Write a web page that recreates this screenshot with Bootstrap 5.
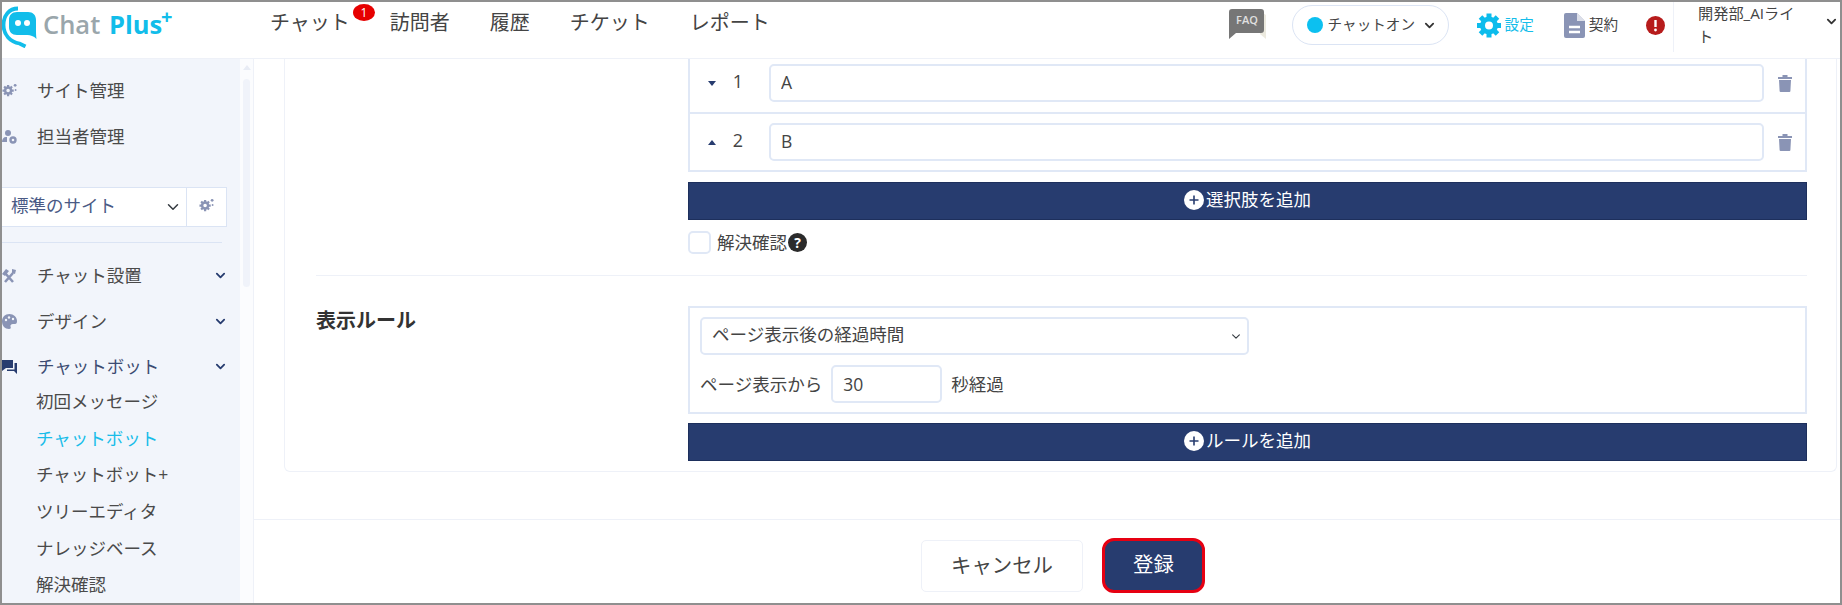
<!DOCTYPE html>
<html lang="ja">
<head>
<meta charset="utf-8">
<title>Chat Plus</title>
<link rel="stylesheet" href="https://cdn.jsdelivr.net/npm/bootstrap@5.3.0/dist/css/bootstrap.min.css">
<style>
html,body{height:605px;overflow:hidden;background:#fff}
body{font-family:"Open Sans","Noto Sans CJK JP",sans-serif;font-size:17.5px;color:#444}
.frame{height:605px;border:2px solid #8f8f8f;display:flex;flex-direction:column;overflow:hidden}
.icon-defs{position:absolute;width:0;height:0}
.top-bar{height:57px;flex:none;border-bottom:1px solid #eef1f8;display:flex;align-items:flex-start}
.logo-box{width:268px;height:46px;flex:none;display:flex;align-items:center}
.logo-mark{flex:none;margin-top:4px}
.logo-word{font-size:25.5px;font-weight:600;color:#9aa6ab;margin-left:5px;line-height:1;white-space:nowrap}
.logo-word b{font-weight:700;color:#12bdea;margin-left:2px}
.logo-word sup{font-size:20px;font-weight:700;color:#12bdea;top:-.5em;margin-left:-1px}
.main-nav{height:42px;align-items:center;gap:40px;display:flex}
.main-nav a{font-size:20px;color:#444;text-decoration:none;white-space:nowrap;position:relative}
.count-pill{position:absolute;left:83px;top:-4px;width:22px;height:17px;border-radius:50%;background:#e60000;color:#fff;font-size:12px;line-height:17px;text-align:center}
.tools{margin-left:auto;display:flex;align-items:center;height:46px;color:#444;font-size:14.6px;white-space:nowrap}
.faq{width:37px;height:30px;margin-right:26px;margin-top:-2px;flex:none}
.on-pill{width:157px;height:40px;border:1px solid #dbe4f4;border-radius:20px;display:flex;align-items:center;padding-left:14px;background:#fff;margin-right:28px}
.on-dot{width:16px;height:16px;border-radius:50%;background:#0cc0f0;margin-right:5px;flex:none}
.pill-chev{color:#333;margin-left:9px}
.tool-item{display:flex;align-items:center;gap:4px}
.tool-set{color:#14bdea;margin-right:30px}
.tool-set svg{color:#0cbcec}
.tool-doc{margin-right:28px}
.user-box{width:167px;height:50px;margin-top:4px;margin-left:8px;border-left:1px solid #eef1f8;padding-left:24px;display:flex;align-items:flex-start;line-height:23px;white-space:normal;font-size:15.2px}
.user-name{width:104px;flex:none;word-break:break-all}
.user-chev{color:#333;margin-top:14px;margin-left:24px;flex:none}
.body-row{flex:1;display:flex;min-height:0}
.side-panel{width:238px;flex:none;background:#f2f5fb;overflow:hidden;padding-top:8px}
.side-link{height:46px;display:flex;align-items:center;color:#4a4a4a;white-space:nowrap;padding-right:14px}
.side-link svg.ico{width:15px;height:15px;margin-right:20px;flex:none;color:#8a94b5}
.side-link .chev{margin-left:auto;color:#273c6f}
.side-link.current,.side-link.current svg.ico{color:#273c6f}
.side-link.current{height:39px;padding-top:6px;color:#3c4c72}
.sub-link{height:36.6px;display:flex;align-items:center;padding-left:34px;color:#4a4a4a}
.sub-link.active-link{color:#18bde9}
.site-pick{margin:28px 13px 15px -6px;height:40px;display:flex}
.site-pick .form-select{flex:1;height:40px;border-radius:0;border:1px solid #dbe4f4;border-right:0;font-size:17.5px;color:#4a5a85;padding:0 0 3px 14px;background-position:right 6px center;background-size:14px 12px}
.site-gear{width:41px;flex:none;border:1px solid #dbe4f4;background:#fff;display:flex;justify-content:center;padding-top:10px}
.site-gear svg{width:15px;height:15px;color:#8a94b5}
.side-rule{height:1px;background:#dbe4f4;margin:0 18px 9px 0}
.rail{width:14px;flex:none;background:#fbfcfe;border-right:1px solid #eef1f8;padding:6px 3px 0;display:flex;flex-direction:column;align-items:center}
.rail-arrow{width:0;height:0;border:4px solid transparent;border-top:0;border-bottom:5px solid #e8ecf5;margin-bottom:9px}
.rail-thumb{width:7px;height:208px;background:#f0f3fa;border-radius:4px}
.work{flex:1;min-width:0;display:flex;flex-direction:column}
.scroll-area{height:460px;flex:none;overflow:hidden;padding:0 3px 0 30px}
.sheet{height:413px;border:1px solid #eef1f8;border-top:0;border-radius:0 0 6px 6px;padding:0 29px 0 31px}
.sheet-top{height:216px;padding-left:372px}
.sheet-rule{height:1px;background:#eef1f8;margin-bottom:30px}
.rule-row{display:flex}
.rule-label{width:372px;flex:none;font-size:20px;font-weight:700;color:#333}
.rule-right{flex:1;min-width:0}
.choice-table{border:2px solid #e0e8f6;border-top:0}
.choice-row{height:53px;display:flex;align-items:center;padding:5px 0 10px 18px}
.choice-row+.choice-row{border-top:2px solid #e0e8f6;height:58px;padding:0 0 0 18px}
.choice-row .form-control{width:995px;flex:none;margin-left:22px}
.choice-num{width:18px;margin-left:13px;text-align:center;flex:none;font-size:18px;padding-bottom:3px}
.tri{width:0;height:0;border:4px solid transparent;flex:none}
.tri.down{border-bottom:0;border-top:5px solid #273c6f}
.tri.up{border-top:0;border-bottom:5px solid #273c6f}
.trash{width:16px;height:18px;margin-left:13px;flex:none;color:#8a94b5}
.form-control,.rule-select{height:38px;border:2px solid #e0e8f6;border-radius:5px;font-size:17.5px;color:#444;padding:0 10px 3px}
.add-bar{width:100%;height:37.5px;background:#273c6f;border:1px solid #1d2f5c;border-radius:0;color:#fff;font-size:17.5px;display:flex;align-items:center;justify-content:center;padding:0 0 1px;line-height:1;margin-top:10px}
.add-bar:hover{background:#273c6f;color:#fff}
.add-bar svg{width:20px;height:20px;margin-right:2px;flex:none}
.add-bar span{padding-bottom:2px}
.rule-box+.add-bar{margin-top:9px}
.confirm-row{display:flex;align-items:center;margin-top:10.5px;height:24px}
.confirm-row .form-check-input{width:23px;height:23px;margin:0 6px 0 0;border:2px solid #e0e8f6;border-radius:5px;flex:none}
.help{width:19px;height:19px;margin-left:1px;flex:none}
.rule-box{height:108px;border:2px solid #e0e8f6;padding:9px 10px}
.rule-select.form-select{width:549px;background-position:right 6px center;background-size:10px 9px;padding-right:20px}
.delay-row{display:flex;align-items:center;margin-top:10px}
.delay-row .form-control{width:111px;margin:0 9px;padding-bottom:1px}
.bottom-bar{flex:1;border-top:1px solid #eef1f8;display:flex;justify-content:center;align-items:flex-start;gap:19px;padding:20px 0 0 32px}
.cancel-btn{width:162px;height:52px;border:1px solid #eef1f8;border-radius:5px;background:#fff;color:#444;font-size:20.4px;padding:0 0 2px}
.save-btn{width:103px;height:55px;margin-top:-2px;border:3px solid #e60012;border-radius:12px;background:#273c6f;color:#fff;font-size:20.4px;padding:0 0 2px}
.save-btn:hover{background:#273c6f;color:#fff;border-color:#e60012}
.cancel-btn:hover{background:#fff;color:#444;border-color:#eef1f8}
</style>
</head>
<body>
<svg class="icon-defs" aria-hidden="true">
  <defs>
    <symbol id="cog" viewBox="0 0 24 24">
      <path stroke="currentColor" stroke-width="5" d="M12 0v6M12 18v6M0 12h6M18 12h6M3.500 3.500l4.500 4.500M16 16l4.500 4.500M20.500 3.500L16 8M8 16l-4.500 4.500"/>
      <circle cx="12" cy="12" r="6.500" fill="none" stroke="currentColor" stroke-width="5"/>
    </symbol>
    <symbol id="cogs" viewBox="0 0 16 16">
      <path stroke="currentColor" stroke-width="2.400" d="M6.500 2v3M6.500 11v3M.5 8h3M9.500 8h3M2.300 3.800l2.100 2.100M8.600 10.100l2.100 2.100M10.700 3.800L8.600 5.900M4.400 10.100l-2.100 2.100"/>
      <circle cx="6.500" cy="8" r="3.200" fill="none" stroke="currentColor" stroke-width="2.600"/>
      <circle cx="14" cy="2.500" r="1.500" fill="currentColor"/><circle cx="14.500" cy="7.500" r="1" fill="currentColor"/>
    </symbol>
    <symbol id="chev" viewBox="0 0 12 12"><path d="M2 4l4 4 4-4" fill="none" stroke="currentColor" stroke-width="2" stroke-linecap="round" stroke-linejoin="round"/></symbol>
    <symbol id="plus-disc" viewBox="0 0 20 20"><circle cx="10" cy="10" r="10" fill="#fff"/><path d="M10 5.500v9M5.500 10h9" stroke="#273c6f" stroke-width="1.600"/></symbol>
    <symbol id="bin" viewBox="0 0 16 18"><path fill="currentColor" d="M1 3h14v2H1zM5.500 1h5v2h-5zM2 6h12l-.6 11a1 1 0 0 1-1 1H3.600a1 1 0 0 1-1-1z"/></symbol>
  </defs>
</svg>
<div class="frame">
  <header class="top-bar">
    <div class="logo-box">
      <svg class="logo-mark" width="36" height="42" viewBox="0 0 36 42">
        <path d="M16 2.500C7 2.500 1.500 9.500 1.500 19c0 10 7 17 16 18.500l6 3" fill="none" stroke="#12bdea" stroke-width="3.800"/>
        <path fill="#12bdea" d="M15 6h11c5 0 8 3 8 8v9c0 3 0 6 .5 10-3-3-6-4-9-4H15c-5 0-8-3-8-8v-7c0-5 3-8 8-8z"/>
        <circle cx="16" cy="17" r="3" fill="#fff"/><circle cx="25" cy="17" r="3" fill="#fff"/>
      </svg>
      <span class="logo-word">Chat <b>Plus</b><sup>+</sup></span>
    </div>
    <nav class="main-nav">
      <a href="#">チャット<span class="count-pill">1</span></a>
      <a href="#">訪問者</a>
      <a href="#">履歴</a>
      <a href="#">チケット</a>
      <a href="#">レポート</a>
    </nav>
    <div class="tools">
      <svg class="faq" viewBox="0 0 37 30">
        <path fill="#eceadf" d="M31 2l6 4v24l-6-5z"/>
        <path fill="#767676" d="M3 0h29a3 3 0 0 1 3 3v18a3 3 0 0 1-3 3H7l-7 6V3a3 3 0 0 1 3-3z"/>
        <text x="18" y="15" text-anchor="middle" font-size="11" font-weight="600" fill="#e0e0e0" font-family="Open Sans">FAQ</text>
      </svg>
      <div class="on-pill"><span class="on-dot"></span>チャットオン<svg class="pill-chev" width="11" height="11"><use href="#chev"/></svg></div>
      <div class="tool-item tool-set"><svg width="24" height="25"><use href="#cog"/></svg>設定</div>
      <div class="tool-item tool-doc">
        <svg width="21" height="25" viewBox="0 0 21 25"><path fill="#8a94b5" d="M2 0h11l8 8v15a2 2 0 0 1-2 2H2a2 2 0 0 1-2-2V2a2 2 0 0 1 2-2z"/><path fill="#fff" d="M13 0v8h8z" opacity=".7"/><path d="M5 14h11M5 19h11" stroke="#fff" stroke-width="2.500"/></svg>契約</div>
      <svg width="19" height="19" viewBox="0 0 19 19"><circle cx="9.500" cy="9.500" r="9.500" fill="#b71c1c"/><path d="M9.500 4v7" stroke="#fff" stroke-width="2.400"/><circle cx="9.500" cy="14" r="1.400" fill="#fff"/></svg>
      <div class="user-box"><span class="user-name">開発部_AIライト</span><svg class="user-chev" width="11" height="11"><use href="#chev"/></svg></div>
    </div>
  </header>
  <div class="body-row">
    <aside class="side-panel">
      <div class="side-link"><svg class="ico"><use href="#cogs"/></svg>サイト管理</div>
      <div class="side-link"><svg class="ico" viewBox="0 0 15 15"><circle cx="6" cy="4" r="3" fill="currentColor"/><path fill="currentColor" d="M0 13c0-3 1.500-5 4-5h1v5z"/><circle cx="11" cy="11" r="2.500" fill="none" stroke="currentColor" stroke-width="2.400"/></svg>担当者管理</div>
      <div class="site-pick">
        <select class="form-select" aria-label="サイト"><option>標準のサイト</option></select>
        <div class="site-gear"><svg><use href="#cogs"/></svg></div>
      </div>
      <div class="side-rule"></div>
      <div class="side-link"><svg class="ico" viewBox="0 0 15 15"><path d="M3 14l8-9M11 14L3 5" stroke="currentColor" stroke-width="2.600"/><path d="M0 6l4-5 3 2-4 5zM10 1l4 1-1 4-3-1z" fill="currentColor"/></svg>チャット設置<svg class="chev" width="11" height="11"><use href="#chev"/></svg></div>
      <div class="side-link"><svg class="ico" viewBox="0 0 15 15"><path fill="currentColor" d="M7.500 0C3 0 0 3 0 7.500S3 15 7 15c2 0 2-1.500 1.500-2.500S9 10 11 10h2c1.500 0 2-1 2-3 0-4-3.500-7-7.500-7z"/><circle cx="4" cy="6" r="1.200" fill="#f2f5fb"/><circle cx="7" cy="3.500" r="1.200" fill="#f2f5fb"/><circle cx="11" cy="5" r="1.200" fill="#f2f5fb"/></svg>デザイン<svg class="chev" width="11" height="11"><use href="#chev"/></svg></div>
      <div class="side-link current"><svg class="ico" viewBox="0 0 15 15"><path fill="currentColor" d="M0 1h11v8H4l-4 3z"/><path fill="currentColor" d="M12.500 4H15v11l-3-3H5v-1.500h7.500z"/></svg>チャットボット<svg class="chev" width="11" height="11"><use href="#chev"/></svg></div>
      <div class="sub-link">初回メッセージ</div>
      <div class="sub-link active-link">チャットボット</div>
      <div class="sub-link">チャットボット+</div>
      <div class="sub-link">ツリーエディタ</div>
      <div class="sub-link">ナレッジベース</div>
      <div class="sub-link">解決確認</div>
    </aside>
    <div class="rail"><span class="rail-arrow"></span><span class="rail-thumb"></span></div>
    <main class="work">
      <div class="scroll-area">
        <section class="sheet">
          <div class="sheet-top">
            <div class="choice-table">
              <div class="choice-row"><span class="tri down"></span><span class="choice-num">1</span><input class="form-control" value="A" aria-label="選択肢1"><svg class="trash"><use href="#bin"/></svg></div>
              <div class="choice-row"><span class="tri up"></span><span class="choice-num">2</span><input class="form-control" value="B" aria-label="選択肢2"><svg class="trash"><use href="#bin"/></svg></div>
            </div>
            <button type="button" class="btn add-bar"><svg><use href="#plus-disc"/></svg><span>選択肢を追加</span></button>
            <div class="confirm-row">
              <input class="form-check-input" type="checkbox" id="confirm">
              <label for="confirm">解決確認</label>
              <svg class="help" viewBox="0 0 19 19"><circle cx="9.500" cy="9.500" r="9.500" fill="#2b2b2b"/><text x="9.500" y="14.500" text-anchor="middle" font-size="14" font-weight="700" fill="#fff" font-family="Open Sans">?</text></svg>
            </div>
          </div>
          <div class="sheet-rule"></div>
          <div class="rule-row">
            <div class="rule-label">表示ルール</div>
            <div class="rule-right">
              <div class="rule-box">
                <select class="form-select rule-select" aria-label="表示ルール"><option>ページ表示後の経過時間</option></select>
                <div class="delay-row"><span>ページ表示から</span><input class="form-control" value="30" aria-label="秒"><span>秒経過</span></div>
              </div>
              <button type="button" class="btn add-bar"><svg><use href="#plus-disc"/></svg><span>ルールを追加</span></button>
            </div>
          </div>
        </section>
      </div>
      <div class="bottom-bar">
        <button type="button" class="btn cancel-btn">キャンセル</button>
        <button type="button" class="btn save-btn">登録</button>
      </div>
    </main>
  </div>
</div>
<script src="https://cdn.jsdelivr.net/npm/bootstrap@5.3.0/dist/js/bootstrap.bundle.min.js"></script>
</body>
</html>
